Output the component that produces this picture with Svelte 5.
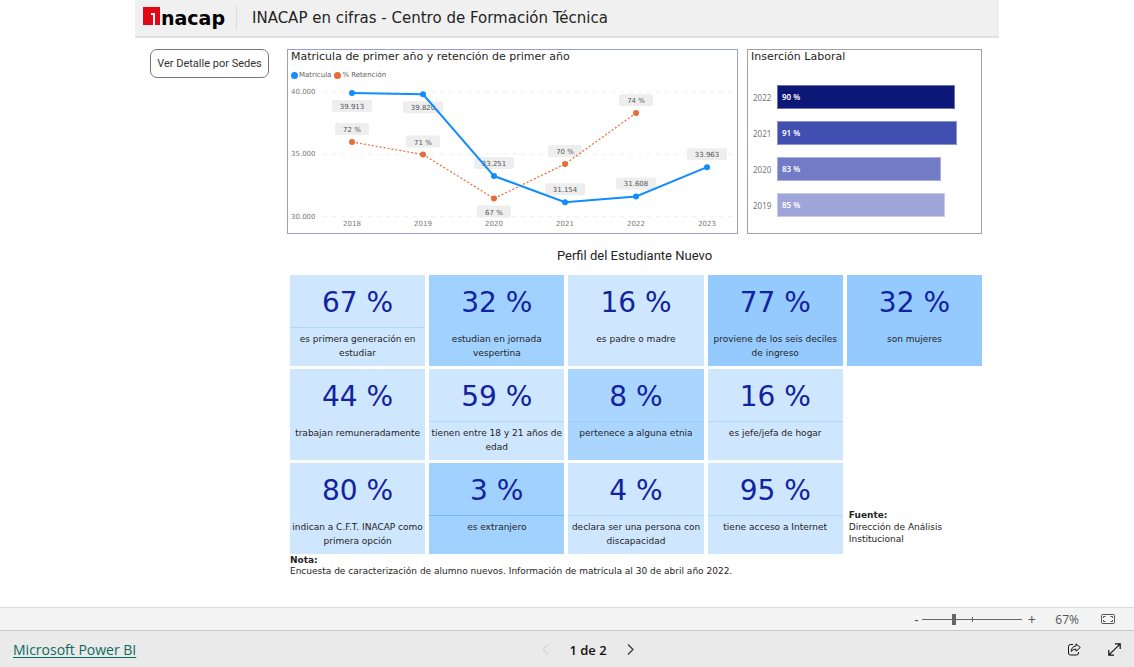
<script>
  const years = [2018, 2019, 2020, 2021, 2022, 2023];
  const enrolment = [
    { label: '39.913', value: 39913, below: true },
    { label: '39.820', value: 39820, below: true },
    { label: '33.251', value: 33251 },
    { label: '31.154', value: 31154 },
    { label: '31.608', value: 31608 },
    { label: '33.963', value: 33963 }
  ];
  const retention = [
    { label: '72 %', value: 72 },
    { label: '71 %', value: 71 },
    { label: '67 %', value: 67.48, below: true },
    { label: '70 %', value: 70.24 },
    { label: '74 %', value: 74.32 }
  ];
  const x = (i) => 64 + i * 71;
  const yEnrolment = (v) => 10 + (40000 - v) * 0.01245;
  const yRetention = (v) => 60 + (72 - v) * 12.5;
  const place = (list, y) =>
    list.map((d, i) => ({ ...d, x: x(i), y: y(d.value), ly: y(d.value) + (d.below ? 13 : -13) }));
  const blue = place(enrolment, yEnrolment);
  const orange = place(retention, yRetention);
  const line = (list) => list.map((p) => `${p.x},${p.y}`).join(' ');
  const ticks = [
    { label: '40.000', value: 40000 },
    { label: '35.000', value: 35000 },
    { label: '30.000', value: 30000 }
  ];

  const jobs = [
    { year: 2022, value: 90, color: '#0c1777' },
    { year: 2021, value: 91, color: '#414fb0' },
    { year: 2020, value: 83, color: '#727bc6' },
    { year: 2019, value: 85, color: '#a0a5d9' }
  ];

  const tiles = [
    { value: '67 %', text: 'es primera generación en estudiar', tone: 'light', rule: true },
    { value: '32 %', text: 'estudian en jornada vespertina', tone: 'mid' },
    { value: '16 %', text: 'es padre o madre', tone: 'light' },
    { value: '77 %', text: 'proviene de los seis deciles de ingreso', tone: 'strong' },
    { value: '32 %', text: 'son mujeres', tone: 'strong' },
    { value: '44 %', text: 'trabajan remuneradamente', tone: 'light', first: true },
    { value: '59 %', text: 'tienen entre 18 y 21 años de edad', tone: 'light', rule: true },
    { value: '8 %', text: 'pertenece a alguna etnia', tone: 'soft', rule: true },
    { value: '16 %', text: 'es jefe/jefa de hogar', tone: 'light', rule: true },
    { value: '80 %', text: 'indican a C.F.T. INACAP como primera opción', tone: 'light', first: true },
    { value: '3 %', text: 'es extranjero', tone: 'mid', rule: true },
    { value: '4 %', text: 'declara ser una persona con discapacidad', tone: 'light', rule: true },
    { value: '95 %', text: 'tiene acceso a Internet', tone: 'light', rule: true }
  ];
</script>

<div class="page">
  <main class="report">
    <header class="top">
      <div class="logo">
        <svg width="18" height="18" viewBox="0 0 18 18" aria-hidden="true">
          <path d="M0 0H17V18H0Z" fill="#e30613" />
          <path d="M8 6H12V18H10V8H8Z" fill="#fff" />
        </svg>
        <span>nacap</span>
      </div>
      <h1>INACAP en cifras - Centro de Formación Técnica</h1>
    </header>

    <div class="body">
      <aside><button class="detail" type="button">Ver Detalle por Sedes</button></aside>

      <div class="content">
        <div class="charts">
          <section class="card trend">
            <h2>Matricula de primer año y retención de primer año</h2>
            <div class="legend">
              <span><i class="dot blue"></i>Matricula</span>
              <span><i class="dot orange"></i>% Retención</span>
            </div>
            <svg class="plot" viewBox="0 0 449 151" role="img" aria-label="Matricula y % Retención">
              {#each ticks as t}
                <line class="grid" x1="35" x2="444" y1={yEnrolment(t.value)} y2={yEnrolment(t.value)} />
                <text class="axis" x="3" y={yEnrolment(t.value) + 2}>{t.label}</text>
              {/each}
              {#each years as year, i}
                <text class="axis mid" x={x(i)} y="144">{year}</text>
              {/each}
              {#each blue as p}
                <rect class="tag" x={p.x - 20} y={p.ly - 6} width="40" height="12" rx="2" />
                <text class="value" x={p.x} y={p.ly + 3}>{p.label}</text>
              {/each}
              {#each orange as p}
                <rect class="tag" x={p.x - 17} y={p.ly - 6} width="34" height="12" rx="2" />
                <text class="value" x={p.x} y={p.ly + 3}>{p.label}</text>
              {/each}
              <polyline class="dotted" points={line(orange)} />
              <polyline class="solid" points={line(blue)} />
              {#each orange as p}<circle cx={p.x} cy={p.y} r="3" fill="#e66c37" />{/each}
              {#each blue as p}<circle cx={p.x} cy={p.y} r="3" fill="#118dff" />{/each}
            </svg>
          </section>

          <section class="card jobs">
            <h2>Inserción Laboral</h2>
            <div class="bars">
              {#each jobs as j}
                <span class="year">{j.year}</span>
                <div class="lane">
                  <div class="bar" style="width: {j.value}%; background-color: {j.color}">{j.value} %</div>
                </div>
              {/each}
            </div>
          </section>
        </div>

        <h2 class="profile">Perfil del Estudiante Nuevo</h2>

        <div class="tiles">
          {#each tiles as t}
            <div class="tile {t.tone}" class:ruled={t.rule} class:first={t.first}>
              <strong>{t.value}</strong>
              <p>{t.text}</p>
            </div>
          {/each}
          <div class="source"><b>Fuente:</b><br />Dirección de Análisis Institucional</div>
        </div>
        <p class="note"><b>Nota:</b><br />Encuesta de caracterización de alumno nuevos. Información de matrícula al 30 de abril año 2022.</p>
      </div>
    </div>
  </main>

  <div class="zoombar">
    <button type="button" aria-label="Alejar">-</button>
    <input type="range" min="0" max="100" value="31" aria-label="Zoom" />
    <button type="button" class="plus" aria-label="Acercar">+</button>
    <span class="percent">67%</span>
    <button type="button" class="fit" aria-label="Ajustar a la página">
      <svg width="14" height="10" viewBox="0 0 14 10" fill="none" stroke="#555">
        <rect x=".5" y=".5" width="13" height="9" rx="1" />
        <path d="M4.500 2.500H2.500V4M9.500 2.500H11.500V4M2.500 6V7.500H4.500M11.500 6V7.500H9.500" />
      </svg>
    </button>
  </div>

  <footer>
    <a href="#powerbi">Microsoft Power BI</a>
    <nav aria-label="Páginas">
      <button type="button" aria-label="Anterior" disabled>
        <svg width="7" height="11" viewBox="0 0 7 11" fill="none" stroke="#c4c4c4"><path d="M6 .5L1 5.500L6 10.500" /></svg>
      </button>
      <span>1 de 2</span>
      <button type="button" aria-label="Siguiente">
        <svg width="7" height="11" viewBox="0 0 7 11" fill="none" stroke="#333" stroke-width="1.200"><path d="M1 .5L6 5.500L1 10.500" /></svg>
      </button>
    </nav>
    <div class="actions">
      <button type="button" aria-label="Compartir">
        <svg width="13" height="13" viewBox="0 0 13 13" fill="none" stroke="#111" stroke-linejoin="round">
          <path d="M5 1.500H2.500Q.5 1.500 .5 3.500V10Q.5 12 2.500 12H8.500Q10.500 12 10.500 10V9" />
          <path d="M8 .8L12.300 4.500L8 8.200V6.200Q5 6 3.200 8.400Q3.600 3.400 8 2.900Z" />
        </svg>
      </button>
      <button type="button" aria-label="Pantalla completa">
        <svg width="13" height="13" viewBox="0 0 13 13" fill="none" stroke="#111" stroke-width="1.200">
          <path d="M.8 12.200L12.200 .8M7 .8H12.200V6M.8 7V12.200H6" />
        </svg>
      </button>
    </div>
  </footer>
</div>

<style>
  :global(body) { margin: 0; background: #fff; }
  .page {
    min-height: 100vh;
    display: flex;
    flex-direction: column;
    font-family: "DejaVu Sans", Verdana, sans-serif;
    color: #252423;
  }
  h1, h2, p { margin: 0; font-weight: 400; }
  button { border: 0; background: none; padding: 0; font: inherit; color: inherit; cursor: pointer; display: flex; align-items: center; justify-content: center; }
  .report { flex: 1; width: 76.2%; min-width: 760px; margin: 0 auto; }
  .top {
    height: 36px;
    display: flex;
    align-items: center;
    background: #f0f0f0;
    border-bottom: 2px solid #e1e1e1;
    padding-left: 8px;
  }
  .logo { display: flex; align-items: center; height: 24px; padding-right: 11px; border-right: 1px solid #dcdcdc; }
  .logo svg { margin-bottom: 4px; }
  .logo span { font-size: 19px; line-height: 24px; font-weight: 700; color: #000; }
  h1 { font-size: 15px; line-height: 20px; padding-left: 15px; }
  .body { display: flex; gap: 18px; padding: 11px 17px 0 15px; }
  aside { flex: none; width: 119px; }
  .detail {
    box-sizing: border-box;
    width: 100%;
    height: 29px;
    border: 1px solid #777;
    border-radius: 7px;
    background: #fff;
    font-family: Roboto, sans-serif;
    font-size: 11px;
    color: #333;
  }
  .content { flex: 1; min-width: 0; }
  .charts { display: grid; grid-template-columns: 451fr 235fr; gap: 9px; }
  .card { border: 1px solid #9a9cd6; min-width: 0; }
  .card.jobs { border-color: #a0a0a0; display: flex; flex-direction: column; }
  h2 { font-size: 11px; line-height: 14px; padding-left: 3px; white-space: nowrap; }
  .legend { display: flex; gap: 3px; padding: 5px 3px 1px; font-size: 7px; line-height: 12px; color: #605e5c; }
  .legend span { display: flex; align-items: center; gap: 1px; }
  .dot { width: 7px; height: 7px; border-radius: 50%; }
  .dot.blue { background: #118dff; }
  .dot.orange { background: #e66c37; }
  .plot { display: block; width: 100%; font-size: 7px; }
  .grid { stroke: #f0f0f0; stroke-dasharray: 4 5; }
  .axis { fill: #777; }
  .value { fill: #555; text-anchor: middle; }
  .mid { text-anchor: middle; }
  .tag { fill: #eee; }
  .solid { fill: none; stroke: #118dff; stroke-width: 2; }
  .dotted { fill: none; stroke: #e66c37; stroke-width: 1.200; stroke-dasharray: 2 2; }
  .bars {
    display: grid;
    grid-template-columns: 18px 1fr;
    gap: 12px 6px;
    align-items: center;
    padding: 21px 6px 0 5px;
    font-family: "Noto Sans", sans-serif;
    font-size: 8px;
  }
  .year { color: #777; }
  .bar {
    box-sizing: border-box;
    height: 24px;
    line-height: 24px;
    padding-left: 5px;
    color: #fff;
    font-weight: 600;
    box-shadow: inset 0 0 0 1px rgb(255 255 255 / 40%);
  }
  .profile { font-family: Roboto, sans-serif; font-size: 13px; line-height: 20px; text-align: center; padding: 12px 0 9px; }
  .tiles { display: grid; grid-template-columns: repeat(5, 1fr); grid-auto-rows: 91px; gap: 3px 4px; margin-left: 3px; }
  .tile { text-align: center; background: #cfe6ff; display: flex; flex-direction: column; min-width: 0; }
  .tile.soft { background: #a9d5ff; }
  .tile.mid { background: #a1d1ff; }
  .tile.strong { background: #95caff; }
  .first { grid-column: 1; }
  .tile strong { font-weight: 400; font-size: 28px; line-height: 32px; padding: 12px 0 8px; color: #12239e; border-bottom: 1px solid transparent; }
  .ruled strong { border-bottom-color: #b0d8ff; }
  .soft.ruled strong { border-bottom-color: #9dcdfa; }
  .mid.ruled strong { border-bottom-color: #74b7f6; }
  .tile p { font-size: 9px; line-height: 14px; padding: 4px 2px 0; }
  .source { grid-column: 5; grid-row: 3; align-self: end; padding: 0 0 9px 2px; font-size: 9px; line-height: 12px; }
  .note { font-size: 9px; line-height: 11px; padding: 1px 3px 0; }
  .zoombar {
    display: flex;
    align-items: center;
    height: 22px;
    padding-right: 19px;
    justify-content: flex-end;
    background: #f4f4f4;
    border-top: 1px solid #dcdcdc;
    font-family: "Open Sans", "Noto Sans", sans-serif;
    font-size: 12px;
    color: #555;
  }
  .zoombar button { font-weight: 600; }
  .zoombar .plus { font-size: 14px; font-weight: 400; width: 9px; margin-left: 5px; }
  .percent { margin: 0 22px 0 19px; }
  input {
    appearance: none;
    width: 100px;
    height: 12px;
    margin: 0 0 0 4px;
    background:
      linear-gradient(#666, #666) 50px 4px / 1px 5px no-repeat,
      linear-gradient(#666, #666) 0 6px / 100% 1px no-repeat;
  }
  input::-webkit-slider-thumb { appearance: none; width: 4px; height: 11px; background: #666; }
  footer {
    display: grid;
    grid-template-columns: 1fr auto 1fr;
    align-items: center;
    height: 35px;
    padding: 1px 13px 0;
    background: #eaeaea;
    border-top: 1px solid #c8c8c8;
    font-family: "Open Sans", "Noto Sans", sans-serif;
  }
  footer a { justify-self: start; color: #0b6a5f; font-size: 14px; text-underline-offset: 2px; }
  nav { display: flex; align-items: center; gap: 20px; font-size: 13px; font-weight: 600; color: #111; margin-left: 42px; }
  .actions { justify-self: end; display: flex; gap: 27px; }
</style>
